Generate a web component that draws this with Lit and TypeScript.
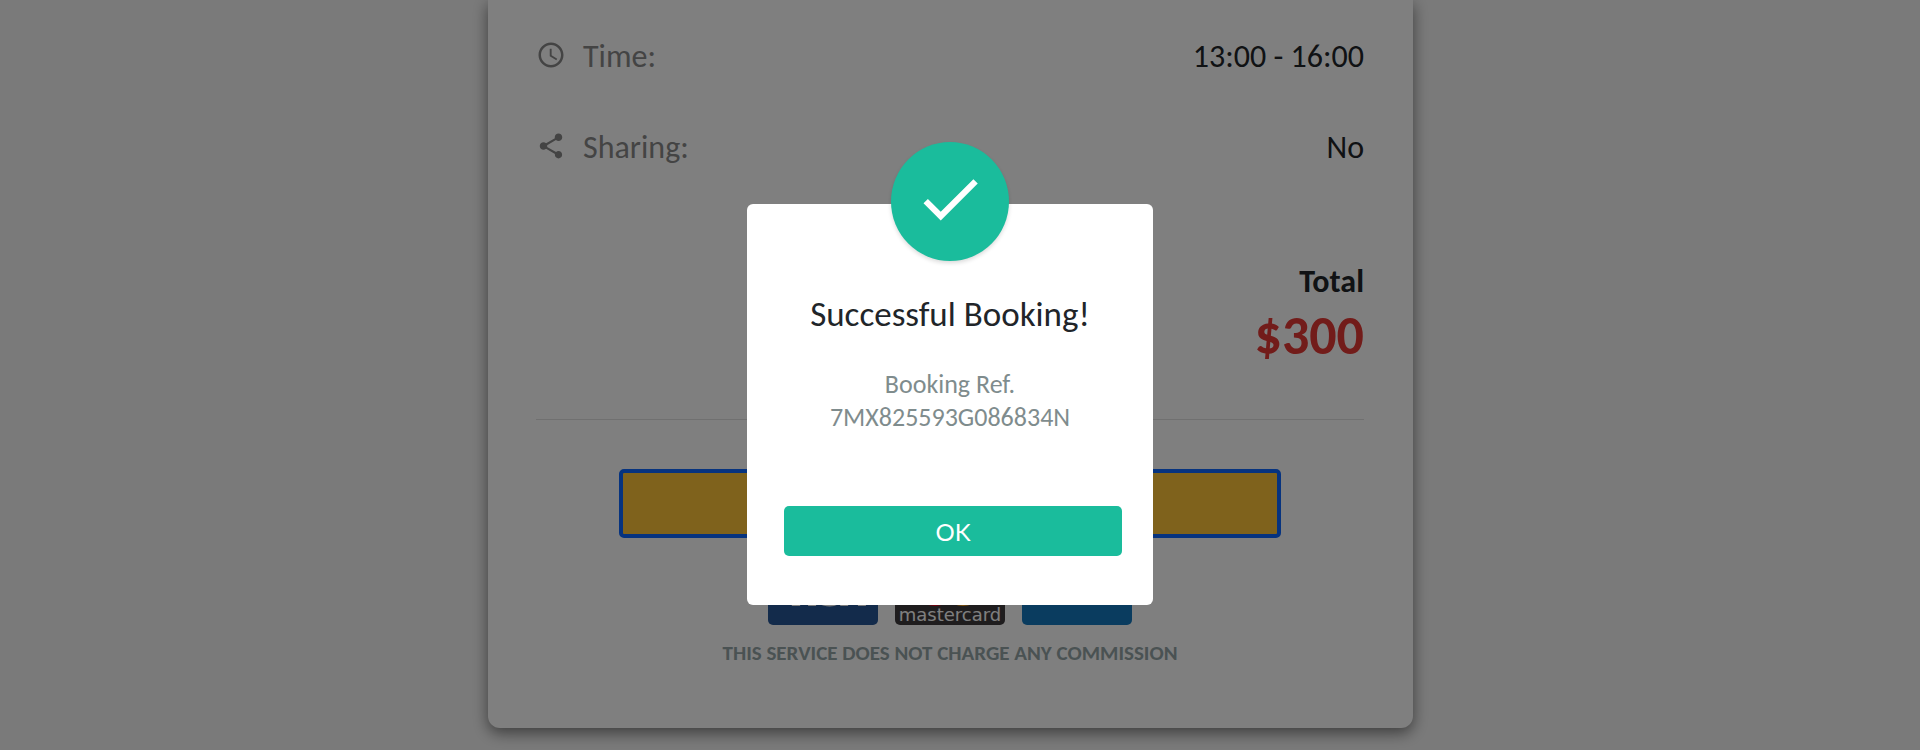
import { LitElement, html, css, svg } from "lit";
import { customElement, state } from "lit/decorators.js";

const clock = svg`<path d="M11.99 2C6.47 2 2 6.48 2 12s4.47 10 9.99 10C17.52 22 22 17.52 22 12S17.52 2 11.99 2zM12 20c-4.42 0-8-3.58-8-8s3.58-8 8-8 8 3.58 8 8-3.58 8-8 8z"/><path d="M12.5 7H11v6l5.25 3.15.75-1.23-4.5-2.67z"/>`;
const share = svg`<path d="M18 16.08c-.76 0-1.44.3-1.96.77L8.91 12.7c.05-.23.09-.46.09-.7s-.04-.47-.09-.7l7.05-4.11c.54.5 1.25.81 2.04.81 1.66 0 3-1.34 3-3s-1.34-3-3-3-3 1.34-3 3c0 .24.04.47.09.7L8.04 9.81C7.5 9.31 6.79 9 6 9c-1.66 0-3 1.34-3 3s1.34 3 3 3c.79 0 1.5-.31 2.04-.81l7.12 4.16c-.05.21-.08.43-.08.65 0 1.61 1.31 2.92 2.92 2.92s2.92-1.31 2.92-2.92-1.31-2.92-2.92-2.92z"/>`;

@customElement("booking-summary")
export class BookingSummary extends LitElement {
  static styles = css`
    :host {
      display: block;
    }
    .card {
      box-sizing: border-box;
      width: calc(100% - 32px);
      max-width: 925px;
      margin: 0 auto;
      padding: 35px 49px 61px 48px;
      background: #fff;
      border-radius: 0 0 12px 12px;
      box-shadow: 0 5px 15px rgba(0, 0, 0, 0.5);
    }
    .details {
      display: grid;
      gap: 48px;
      margin: 0;
    }
    .row {
      display: flex;
      justify-content: space-between;
      line-height: 43px;
    }
    dt {
      display: flex;
      gap: 17px;
      color: #888;
    }
    dd {
      margin: 0;
      color: #212529;
    }
    .icon {
      width: 30px;
      height: 40px;
      fill: currentColor;
    }
    .total {
      margin-top: 91px;
      text-align: right;
      font-weight: 700;
      line-height: 43px;
      color: #212529;
    }
    .amount {
      font-size: 54px;
      line-height: 66px;
      color: #e53935;
    }
    hr {
      margin: 50px 0 49px;
      border: 0;
      border-top: 1px solid #e0e0e0;
    }
    .pay {
      display: block;
      width: 80%;
      height: 69px;
      margin: 0 auto;
      background: #ffc439;
      border: 4px solid #0c67ff;
      border-radius: 5px;
    }
    .brands {
      display: flex;
      justify-content: center;
      gap: 17px;
      margin-top: 17px;
    }
    .brand {
      width: 110px;
      height: 70px;
    }
    .note {
      margin: 15px 0 0;
      text-align: center;
      font-size: 21px;
      font-weight: 700;
      line-height: 27px;
      color: #95a5a6;
    }
  `;

  render() {
    return html`
      <main class="card">
        <dl class="details">
          <div class="row">
            <dt><svg class="icon" viewBox="0 0 24 24" aria-hidden="true">${clock}</svg>Time:</dt>
            <dd>13:00 - 16:00</dd>
          </div>
          <div class="row">
            <dt><svg class="icon" viewBox="0 0 24 24" aria-hidden="true">${share}</svg>Sharing:</dt>
            <dd>No</dd>
          </div>
        </dl>
        <div class="total">
          <div>Total</div>
          <div class="amount">$300</div>
        </div>
        <hr />
        <button class="pay" aria-label="Pay"></button>
        <div class="brands">
          <svg class="brand" viewBox="0 0 110 70">
            <rect width="110" height="70" rx="5" fill="#265697" />
            <path d="M12 21h9l8 20 6-20h8L32 51h-8zM46 21h7l-5 30h-8zM74 22c-10-4-18 1-18 8 0 8 12 7 11 12-1 4-8 3-13 1l-3 6c8 4 22 4 24-7 1-9-12-9-11-13 1-3 6-2 9-1zM86 21h7l5 30h-8l-1-6h-7l-2 6h-8z" fill="#fff" />
          </svg>
          <svg class="brand" viewBox="0 0 110 70">
            <rect width="110" height="70" rx="5" fill="#3e3a3d" />
            <circle cx="40" cy="27" r="24" fill="#eb001b" />
            <circle cx="68" cy="27" r="24" fill="#f79e1b" />
            <text x="55" y="66" text-anchor="middle" font-family="DejaVu Sans" font-size="18" fill="#fff">mastercard</text>
          </svg>
          <svg class="brand" viewBox="0 0 110 70">
            <rect width="110" height="70" rx="5" fill="#1478be" />
          </svg>
        </div>
        <p class="note">THIS SERVICE DOES NOT CHARGE ANY COMMISSION</p>
      </main>
    `;
  }
}

@customElement("success-dialog")
export class SuccessDialog extends LitElement {
  static styles = css`
    .backdrop {
      position: fixed;
      inset: 0;
      box-sizing: border-box;
      padding: 204px 20px 0 0;
      background: rgba(0, 0, 0, 0.5);
      overflow: hidden;
    }
    .dialog {
      position: relative;
      box-sizing: border-box;
      width: 406px;
      max-width: 100%;
      margin: 0 auto;
      padding: 86px 31px 49px 37px;
      background: #fff;
      border-radius: 6px;
    }
    .badge {
      position: absolute;
      top: -62px;
      left: 50%;
      box-sizing: border-box;
      display: grid;
      place-items: center;
      width: 118px;
      height: 119px;
      margin-left: -59px;
      padding-bottom: 5px;
      border-radius: 50%;
      background: #1abc9c;
      box-shadow: 0 2px 4px rgba(0, 0, 0, 0.15);
    }
    .check {
      width: 74px;
      height: 74px;
      fill: #fff;
    }
    .text {
      margin-right: 6px;
      text-align: center;
    }
    h1 {
      margin: 0;
      font-size: 35px;
      font-weight: 400;
      line-height: 48px;
      color: #212529;
    }
    p {
      margin: 30px 0 72px;
      font-size: 26px;
      line-height: 33px;
      color: #7f8c8d;
    }
    .ok {
      width: 100%;
      height: 50px;
      padding: 0;
      border: 0;
      border-radius: 5px;
      background: #1abc9c;
      color: #fff;
      font-family: Lato, sans-serif;
      font-size: 24px;
    }
  `;

  @state() private open = true;

  render() {
    if (!this.open) return null;
    return html`
      <div class="backdrop">
        <section class="dialog" role="dialog" aria-modal="true" aria-labelledby="title">
          <div class="badge">
            <svg class="check" viewBox="0 0 24 24" aria-hidden="true">
              <path d="M9 16.17L4.83 12l-1.42 1.41L9 19 21 7l-1.41-1.41z" />
            </svg>
          </div>
          <div class="text">
            <h1 id="title">Successful Booking!</h1>
            <p>Booking Ref.<br />7MX825593G086834N</p>
          </div>
          <button class="ok" @click=${() => (this.open = false)}>OK</button>
        </section>
      </div>
    `;
  }
}

@customElement("app-root")
export class AppRoot extends LitElement {
  static styles = css`
    :host {
      display: block;
      box-sizing: border-box;
      min-height: 100vh;
      padding: 0 19px 22px 0;
      background: #f5f5f5;
      font-family: Carlito, Calibri, Lato, sans-serif;
      font-size: 32px;
    }
  `;

  render() {
    return html`<booking-summary></booking-summary><success-dialog></success-dialog>`;
  }
}
